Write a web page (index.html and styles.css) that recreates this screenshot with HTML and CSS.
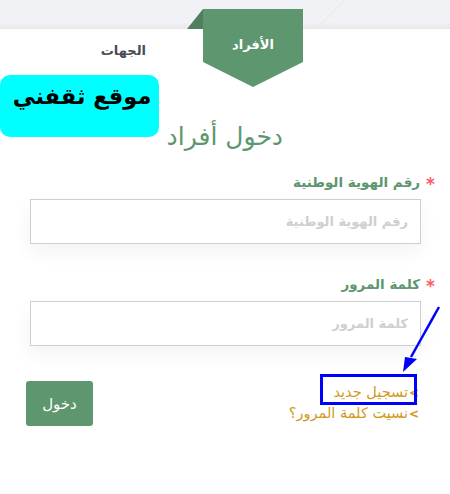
FILE: index.html
```html
<!DOCTYPE html>
<html lang="ar" dir="rtl">
<head>
<meta charset="utf-8">
<title>دخول أفراد</title>
<link rel="stylesheet" href="styles.css">
</head>
<body>
<div class="page">
  <header class="topbar">
    <svg class="topline" width="60" height="29" viewBox="0 0 60 29"><path d="M0 29 L29 0" stroke="#e9e6dc" stroke-width="1" fill="none"/></svg>
  </header>
  <nav class="tabs">
    <div class="tab-active">
      <span class="tab-fold"></span>
      <span class="tab-flag"><span class="tab-label">الأفراد</span></span>
    </div>
    <a class="tab-other">الجهات</a>
  </nav>
  <main class="panel">
    <h1 class="title">دخول أفراد</h1>
    <form class="form">
      <div class="field">
        <label class="label"><span class="star">*</span>رقم الهوية الوطنية</label>
        <input class="input" type="text" placeholder="رقم الهوية الوطنية">
      </div>
      <div class="field">
        <label class="label"><span class="star">*</span>كلمة المرور</label>
        <input class="input" type="text" placeholder="كلمة المرور">
      </div>
      <div class="actions">
        <ul class="links">
          <li class="link"><span class="chev">&gt;</span>تسجيل جديد</li>
          <li class="link"><span class="chev">&gt;</span>نسيت كلمة المرور؟</li>
        </ul>
        <button class="submit" type="button">دخول</button>
      </div>
    </form>
  </main>
  <div class="stamp"><span class="stamp-text">موقع ثقفني</span></div>
  <div class="highlight"></div>
  <svg class="arrow" width="50" height="70" viewBox="0 0 50 70">
    <path d="M38 1 L10 51" stroke="#0000ff" stroke-width="2.5" fill="none"/>
    <path d="M2 66 L4 51 L16 53 Z" fill="#0000ff"/>
  </svg>
</div>
</body>
</html>
```
FILE: styles.css
```css
* { box-sizing: border-box; }
html, body { margin: 0; padding: 0; background: #fff; }
body { font-family: "DejaVu Sans", sans-serif; }
.page { position: relative; width: 450px; height: 494px; overflow: hidden; }

.topbar {
  position: relative;
  height: 29px;
  background: linear-gradient(#f1f2f5 0, #f1f2f5 22px, #e8e8ea 29px);
}
.topline { position: absolute; left: 316px; top: 0; }

.tabs {
  display: flex;
  height: 46px;
  padding-right: 147px;
  align-items: flex-start;
}
.tab-active { position: relative; width: 100px; height: 46px; flex: none; }
.tab-flag {
  position: absolute;
  top: -20px;
  left: 0;
  width: 100px;
  height: 78px;
  background: #5e966f;
  clip-path: polygon(0 0, 100% 0, 100% 53px, 50% 100%, 0 53px);
  display: flex;
  justify-content: center;
  padding-top: 26px;
}
.tab-fold {
  position: absolute;
  top: -20px;
  right: 100%;
  width: 16px;
  height: 20px;
  background: #4f7f5e;
  clip-path: polygon(100% 0, 100% 100%, 0 100%);
}
.tab-label { color: #fff; font-size: 13px; font-weight: 700; line-height: 20px; }
.tab-other {
  color: #4a4a55;
  font-size: 13px;
  font-weight: 700;
  line-height: 20px;
  margin-top: 12px;
  margin-right: 57px;
}

.panel { padding: 0 29px 0 30px; }
.title {
  margin: 47px 0 0;
  padding-right: 138px;
  color: #5e966f;
  font-size: 25px;
  font-weight: 400;
  line-height: 30px;
}
.form { display: block; margin-top: 21px; }
.field { margin-bottom: 31px; }
.label {
  display: block;
  color: #5e966f;
  font-size: 13.5px;
  font-weight: 700;
  line-height: 18px;
  margin: 0 -14px 6px 0;
}
.star {
  display: inline-block;
  color: #ff5a5f;
  font-size: 17px;
  font-weight: 700;
  line-height: 18px;
  width: 15px;
  vertical-align: -3px;
}
.input {
  display: block;
  width: 391px;
  height: 45px;
  border: 1px solid #cfcfcf;
  background: #fff;
  padding: 0 12px;
  font: 700 13px "DejaVu Sans", sans-serif;
  box-shadow: 0 8px 20px rgba(0, 0, 0, 0.05);
  outline: none;
}
.input::placeholder { color: #cfcfcf; opacity: 1; }

.actions {
  display: flex;
  justify-content: space-between;
  align-items: flex-start;
  margin-top: 35px;
  margin-left: -4px;
}
.links { list-style: none; margin: 1px 2px 0 0; padding: 0; }
.link { color: #d09a1c; font-size: 14.5px; font-weight: 400; line-height: 20px; }
.chev { display: inline-block; width: 11px; font-size: 12px; font-weight: 700; }
.submit {
  width: 67px;
  height: 45px;
  border: 0;
  border-radius: 3px;
  background: #5e966f;
  color: #fff;
  font: 400 15px "DejaVu Sans", sans-serif;
}

.stamp {
  position: absolute;
  left: 0;
  top: 75px;
  width: 159px;
  height: 62px;
  background: #00ffff;
  border-radius: 10px;
  display: flex;
  justify-content: center;
  padding: 6px 0 0 5px;
}
.stamp-text { color: #000; font-size: 22.5px; font-weight: 700; line-height: 30px; }
.highlight {
  position: absolute;
  left: 320px;
  top: 374px;
  width: 97px;
  height: 31px;
  border: 3px solid #0000ff;
}
.arrow { position: absolute; left: 401px; top: 306px; }
```
